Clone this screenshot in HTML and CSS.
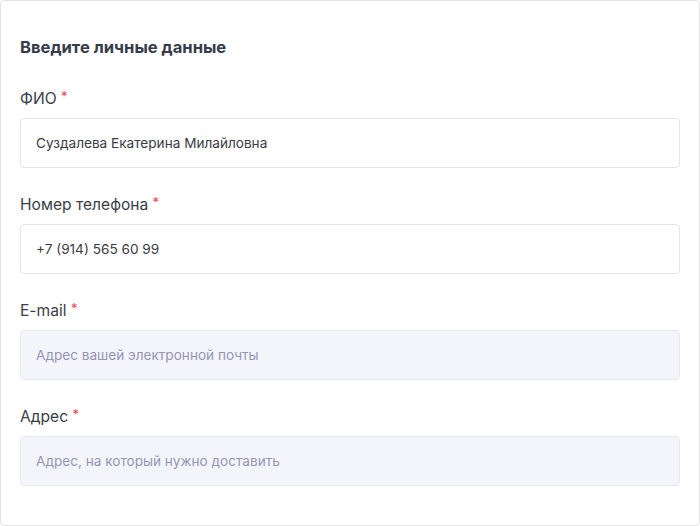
FILE: index.html
```html
<!DOCTYPE html>
<html lang="ru">
<head>
<meta charset="utf-8">
<title>Личные данные</title>
<link rel="stylesheet" href="styles.css">
</head>
<body>
<form class="card">
  <h2 class="title">Введите личные данные</h2>
  <div class="fields">
    <label class="field">
      <span class="label">ФИО <span class="req">*</span></span>
      <input class="input" type="text" value="Суздалева Екатерина Милайловна">
    </label>
    <label class="field">
      <span class="label">Номер телефона <span class="req">*</span></span>
      <input class="input" type="text" value="+7 (914) 565 60 99">
    </label>
    <label class="field">
      <span class="label">E-mail <span class="req">*</span></span>
      <input class="input input-empty" type="text" placeholder="Адрес вашей электронной почты">
    </label>
    <label class="field">
      <span class="label">Адрес <span class="req">*</span></span>
      <input class="input input-empty" type="text" placeholder="Адрес, на который нужно доставить">
    </label>
  </div>
</form>
</body>
</html>
```
FILE: styles.css
```css
* { box-sizing: border-box; }
html, body { margin: 0; padding: 0; background: #ffffff; }
body { font-family: "Inter", "Noto Sans", sans-serif; }
.card {
  width: 700px;
  height: 526px;
  border: 1px solid #e4e4e6;
  border-radius: 4px;
  padding: 34px 19px 40px;
  display: flex;
  flex-direction: column;
}
.title {
  margin: 0;
  font-size: 16.6px;
  line-height: 24px;
  font-weight: 700;
  color: #363c4b;
}
.fields {
  margin-top: 29px;
  display: flex;
  flex-direction: column;
  gap: 26px;
}
.field {
  display: flex;
  flex-direction: column;
  gap: 10px;
}
.label {
  display: block;
  height: 20px;
  font-size: 15.6px;
  line-height: 22px;
  color: #3a3e48;
}
.req { color: #e8454f; font-size: 13px; line-height: 1; vertical-align: 3px; }
.input {
  height: 50px;
  width: 100%;
  border: 1px solid #e5e5e7;
  border-radius: 4px;
  background: #ffffff;
  padding: 0 15px;
  font-family: inherit;
  font-size: 13.6px;
  color: #3a3c44;
  outline: none;
}
.input-empty {
  background: #f4f5fb;
  border-color: #e6e8f6;
}
.input::placeholder { color: #9494b4; }
```
